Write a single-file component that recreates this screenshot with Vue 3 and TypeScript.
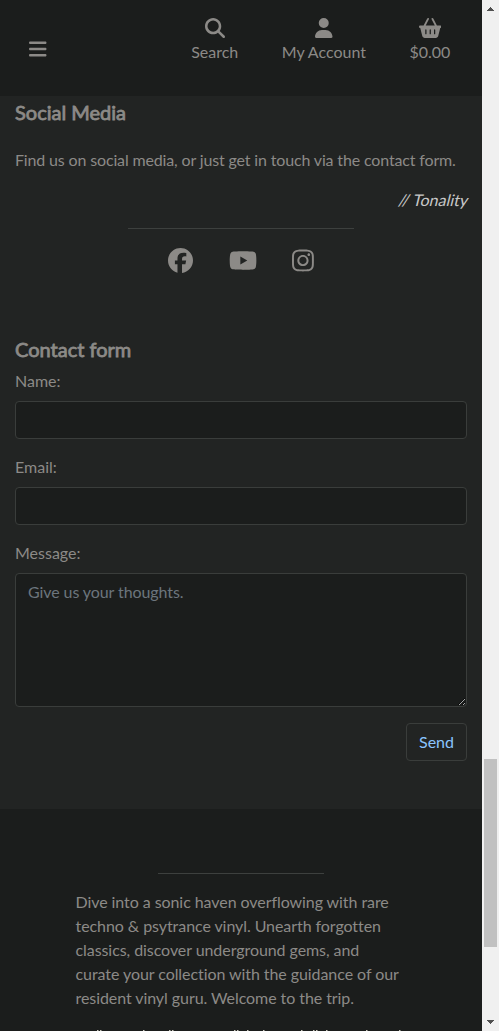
<script setup lang="ts">
import { ref } from 'vue'

interface Icon {
  box: string
  width: number
  height: number
  path: string
}
interface NavItem {
  label: string
  icon: Icon
}

const menuIcon: Icon = {
  box: '0 0 448 512',
  width: 17.5,
  height: 20,
  path: 'M0 96C0 78.3 14.3 64 32 64H416c17.7 0 32 14.3 32 32s-14.3 32-32 32H32C14.3 128 0 113.7 0 96zM0 256c0-17.7 14.3-32 32-32H416c17.7 0 32 14.3 32 32s-14.3 32-32 32H32c-17.7 0-32-14.3-32-32zM448 416c0 17.7-14.3 32-32 32H32c-17.7 0-32-14.3-32-32s14.3-32 32-32H416c17.7 0 32 14.3 32 32z',
}

const navItems: NavItem[] = [
  {
    label: 'Search',
    icon: {
      box: '0 0 512 512',
      width: 20,
      height: 20,
      path: 'M416 208c0 45.9-14.9 88.3-40 122.7L502.6 457.4c12.5 12.5 12.5 32.8 0 45.3s-32.8 12.5-45.3 0L330.7 376c-34.4 25.2-76.8 40-122.7 40C93.1 416 0 322.9 0 208S93.1 0 208 0S416 93.1 416 208zM208 352a144 144 0 1 0 0-288 144 144 0 1 0 0 288z',
    },
  },
  {
    label: 'My Account',
    icon: {
      box: '0 0 448 512',
      width: 17.5,
      height: 20,
      path: 'M224 256A128 128 0 1 0 224 0a128 128 0 1 0 0 256zm-45.7 48C79.8 304 0 383.8 0 482.3C0 498.7 13.3 512 29.7 512H418.3c16.4 0 29.7-13.3 29.7-29.7C448 383.8 368.2 304 269.7 304H178.3z',
    },
  },
  {
    label: '$0.00',
    icon: {
      box: '0 0 576 512',
      width: 22.5,
      height: 20,
      path: 'M253.3 35.1c6.1-11.8 1.5-26.3-10.2-32.4s-26.3-1.5-32.4 10.2L117.6 192H32c-17.7 0-32 14.3-32 32s14.3 32 32 32L83.9 463.5C91 492 116.6 512 146 512H430c29.4 0 55-20 62.1-48.5L544 256c17.7 0 32-14.3 32-32s-14.3-32-32-32H458.4L365.3 12.9C359.2 1.2 344.7-3.4 332.9 2.7s-16.3 20.6-10.2 32.4L404.3 192H171.7L253.3 35.1zM192 304v96c0 8.8-7.2 16-16 16s-16-7.2-16-16V304c0-8.8 7.2-16 16-16s16 7.2 16 16zm96-16c8.8 0 16 7.2 16 16v96c0 8.8-7.2 16-16 16s-16-7.2-16-16V304c0-8.8 7.2-16 16-16zm128 16v96c0 8.8-7.2 16-16 16s-16-7.2-16-16V304c0-8.8 7.2-16 16-16s16 7.2 16 16z',
    },
  },
]

const socialIcons: Icon[] = [
  {
    box: '0 0 512 512',
    width: 25,
    height: 25,
    path: 'M512 256C512 114.6 397.4 0 256 0S0 114.6 0 256C0 376 82.7 476.8 194.2 504.5V334.2H141.4V256h52.8V222.3c0-87.1 39.4-127.5 125-127.5c16.2 0 44.2 3.2 55.7 6.4V172c-6-.6-16.5-1-29.6-1c-42 0-58.2 15.9-58.2 57.2V256h83.6l-14.4 78.2H287V510.1C413.8 494.8 512 386.9 512 256h0z',
  },
  {
    box: '0 0 576 512',
    width: 28.125,
    height: 25,
    path: 'M549.655 124.083c-6.281-23.65-24.787-42.276-48.284-48.597C458.781 64 288 64 288 64S117.22 64 74.629 75.486c-23.497 6.322-42.003 24.947-48.284 48.597-11.412 42.867-11.412 132.305-11.412 132.305s0 89.438 11.412 132.305c6.281 23.65 24.787 41.5 48.284 47.821C117.22 448 288 448 288 448s170.78 0 213.371-11.486c23.497-6.321 42.003-24.171 48.284-47.821 11.412-42.867 11.412-132.305 11.412-132.305s0-89.438-11.412-132.305zm-317.51 213.508V175.185l142.739 81.205-142.739 81.201z',
  },
  {
    box: '0 0 448 512',
    width: 21.875,
    height: 25,
    path: 'M224.1 141c-63.6 0-114.9 51.3-114.9 114.9s51.3 114.9 114.9 114.9S339 319.5 339 255.9 287.7 141 224.1 141zm0 189.6c-41.1 0-74.7-33.5-74.7-74.7s33.5-74.7 74.7-74.7 74.7 33.5 74.7 74.7-33.6 74.7-74.7 74.7zm146.4-194.3c0 14.9-12 26.8-26.8 26.8-14.9 0-26.8-12-26.8-26.8s12-26.8 26.8-26.8 26.8 12 26.8 26.8zm76.1 27.2c-1.7-35.9-9.9-67.7-36.2-93.9-26.2-26.2-58-34.4-93.9-36.2-37-2.1-147.9-2.1-184.9 0-35.8 1.7-67.6 9.9-93.9 36.1s-34.4 58-36.2 93.9c-2.1 37-2.1 147.9 0 184.9 1.7 35.9 9.9 67.7 36.2 93.9s58 34.4 93.9 36.2c37 2.1 147.9 2.1 184.9 0 35.9-1.7 67.7-9.9 93.9-36.2 26.2-26.2 34.4-58 36.2-93.9 2.1-37 2.1-147.8 0-184.8zM398.8 388c-7.8 19.6-22.9 34.7-42.6 42.6-29.5 11.7-99.5 9-132.1 9s-102.7 2.6-132.1-9c-19.6-7.8-34.7-22.9-42.6-42.6-11.7-29.5-9-99.5-9-132.1s-2.6-102.7 9-132.1c7.8-19.6 22.9-34.7 42.6-42.6 29.5-11.7 99.5-9 132.1-9s102.7-2.6 132.1 9c19.6 7.8 34.7 22.9 42.6 42.6 11.7 29.5 9 99.5 9 132.1s2.7 102.7-9 132.1z',
  },
]

// Tips of the ascenders and quotation marks of the line below the fold
const ascenders = [97, 100, 143, 169, 172, 234, 237, 247, 263, 301, 313, 316, 326, 366, 399]

const name = ref('')
const email = ref('')
const message = ref('')
</script>

<template>
  <div class="window">
    <div class="page">
      <header class="header">
        <button class="menu" type="button" aria-label="Menu">
          <svg :viewBox="menuIcon.box" :width="menuIcon.width" :height="menuIcon.height"><path :d="menuIcon.path" /></svg>
        </button>
        <nav class="nav">
          <a v-for="item in navItems" :key="item.label" class="nav-item">
            <svg :viewBox="item.icon.box" :width="item.icon.width" :height="item.icon.height"><path :d="item.icon.path" /></svg>
            <span>{{ item.label }}</span>
          </a>
        </nav>
      </header>

      <main class="main">
        <h2 class="heading">Social Media</h2>
        <p class="intro">Find us on social media, or just get in touch via the contact form.</p>
        <p class="signature"><span>// Tonality</span></p>
        <hr class="rule" />
        <div class="social">
          <svg v-for="(icon, i) in socialIcons" :key="i" :viewBox="icon.box" :width="icon.width" :height="icon.height"><path :d="icon.path" /></svg>
        </div>

        <h2 class="heading">Contact form</h2>
        <form class="form" @submit.prevent>
          <label for="name">Name:</label>
          <input id="name" v-model="name" class="field" type="text" />
          <label for="email">Email:</label>
          <input id="email" v-model="email" class="field" type="email" />
          <label for="message">Message:</label>
          <textarea id="message" v-model="message" class="field area" placeholder="Give us your thoughts."></textarea>
          <button class="send" type="submit">Send</button>
        </form>
      </main>

      <footer class="footer">
        <hr class="rule" />
        <p class="about">Dive into a sonic haven overflowing with rare techno &amp; psytrance vinyl. Unearth forgotten classics, discover underground gems, and curate your collection with the guidance of our resident vinyl guru. Welcome to the trip.</p>
        <svg class="tips" viewBox="75 0 333 1" width="333" height="1">
          <rect v-for="x in ascenders" :key="x" :x="x" y="0" width="1.5" height="1" />
        </svg>
      </footer>
    </div>

    <div class="scrollbar">
      <svg width="7" height="4" viewBox="0 0 7 4"><path d="M3 0h1v1h1v1h1v1h1v1H0V3h1V2h1V1h1z" /></svg>
      <div class="thumb"></div>
      <svg width="7" height="4" viewBox="0 0 7 4"><path d="M0 0h7v1H6v1H5v1H4v1H3V3H2V2H1V1H0z" /></svg>
    </div>
  </div>
</template>

<style>
html,
body {
  margin: 0;
  overflow: hidden;
  background: #1b1d1c;
}
</style>

<style scoped>
* {
  box-sizing: border-box;
}
.window {
  display: flex;
  width: 499px;
  height: 1031px;
  overflow: hidden;
  font: 16px/24px Lato, sans-serif;
  color: #8c8a87;
}
.page {
  width: 482px;
  background: #1b1d1c;
}
svg {
  display: block;
  fill: currentColor;
}
.header {
  display: flex;
  justify-content: space-between;
  height: 96px;
  padding: 18px 31.6px 0 29px;
}
.menu {
  align-self: flex-start;
  margin: 20.5px 0 0;
  padding: 0;
  border: 0;
  background: none;
  color: inherit;
}
.nav {
  display: flex;
  gap: 43.5px;
}
.nav-item {
  display: flex;
  flex-direction: column;
  align-items: center;
  gap: 2px;
}
.main {
  height: 713px;
  padding: 4px 15px 0;
  background: #222423;
}
.heading {
  margin: 0;
  height: 24px;
  font-size: 20px;
  line-height: 24px;
  font-weight: 400;
  -webkit-text-stroke: 0.8px currentColor;
}
.intro {
  margin: 24px 0 16px;
  white-space: nowrap;
  letter-spacing: -0.15px;
}
.signature {
  margin: 0 -1.5px 16px 0;
  text-align: right;
  color: #c8c8c8;
}
.signature span {
  display: inline-block;
  transform: skewX(-14deg);
}
.rule {
  width: 50%;
  height: 1px;
  margin: 0 auto;
  border: 0;
  background: #3d403e;
}
.social {
  display: flex;
  justify-content: center;
  gap: 35.6px;
  margin: 19.4px 0 63.6px;
}
.form {
  display: flex;
  flex-direction: column;
  padding-top: 8px;
}
.field {
  width: 100%;
  height: 38px;
  margin: 8px 0 16px;
  padding: 6px 12px;
  border: 1px solid #3a3d3b;
  border-radius: 4px;
  background: #1b1d1c;
  color: inherit;
  font: inherit;
  outline: none;
  color-scheme: dark;
}
.area {
  height: 134px;
  resize: vertical;
  letter-spacing: -0.09px;
}
.area::placeholder {
  color: #6c757d;
  opacity: 1;
}
.send {
  align-self: flex-end;
  width: 61px;
  height: 38px;
  padding: 0;
  border: 1px solid #3a3d3b;
  border-radius: 4px;
  background: #222423;
  color: #8ac4ff;
  font: inherit;
}
.footer {
  width: 333px;
  margin: 0 auto;
  padding-top: 64px;
}
.about {
  margin: 16px 0 20px 1px;
  padding-right: 6px;
  letter-spacing: -0.07px;
}
.tips {
  fill: #c9c7bd;
}
.scrollbar {
  display: flex;
  flex-direction: column;
  align-items: center;
  width: 17px;
  padding: 7px 0;
  background: #f0f0f0;
  color: #505050;
}
.thumb {
  width: 13px;
  height: 188px;
  margin: 748px 2px 73px;
  background: #c1c1c1;
}
</style>
